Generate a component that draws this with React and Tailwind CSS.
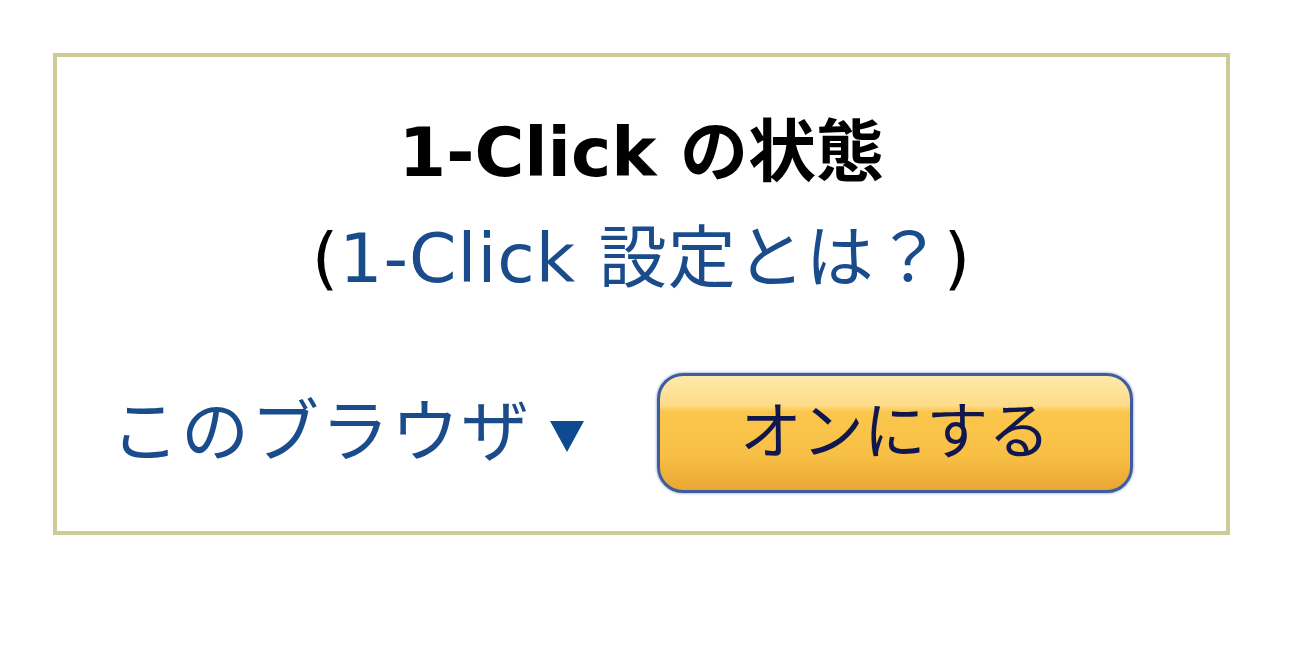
export default function App() {
  return (
    <div
      className="w-[1300px] h-[653px] bg-white pt-[53px] pl-[53px]"
      style={{ fontFamily: '"DejaVu Sans", "Noto Sans CJK JP", sans-serif' }}
    >
      {/* Box */}
      <div className="w-[1177px] h-[482px] border-[4px] border-[#cccc99] flex flex-col items-center">
        <div className="mt-[56px] text-[68px] leading-[80px] font-bold text-black">
          1-Click の状態
        </div>
        <div className="mt-[26px] text-[68px] leading-[80px] text-black tracking-[1px]">
          (<span className="text-[#1a4c8c]">1-Click 設定とは？</span>)
        </div>

        {/* Browser row */}
        <div className="mt-[74px] w-full flex items-center pl-[54px]">
          <div className="text-[68px] leading-[80px] text-[#1a4c8c] tracking-[2px] flex items-center">
            このブラウザ
            <svg width="36" height="34" viewBox="0 0 36 34" className="ml-[18px] mt-[6px]">
              <path d="M1 2 H35 L18 33 Z" fill="#0d4a8f" />
            </svg>
          </div>
          <button className="ml-[72px] w-[476px] h-[120px] rounded-[26px] border-[3px] border-[#3f5d9e] bg-[linear-gradient(to_bottom,#fee9aa_0%,#fddc88_26%,#fbc64c_31%,#f8bf45_70%,#e9a634_100%)] text-[#10174f] text-[62px] leading-none flex items-center justify-center shadow-[0_0_3px_#6b82b8]">
            オンにする
          </button>
        </div>
      </div>
    </div>
  )
}
